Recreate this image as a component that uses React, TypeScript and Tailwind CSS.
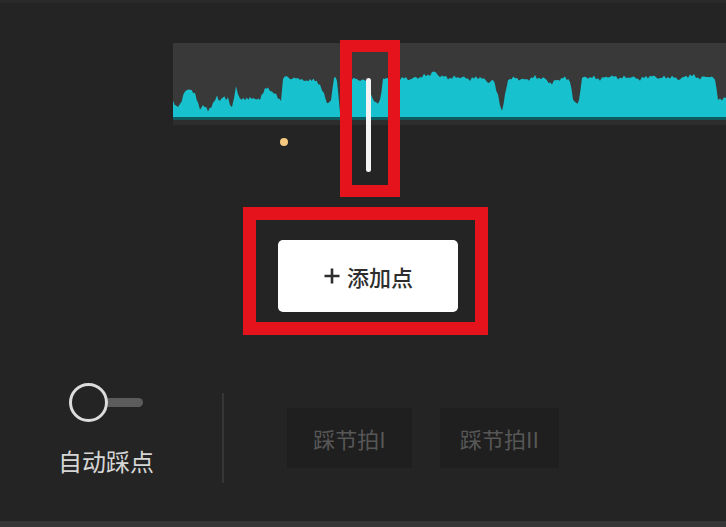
import React from "react";

const KEYS: [number, number][] = [
  [173,102],[176,107],[180,104],[185,92],[190,88],[195,95],[200,108],[203,106],[208,110],[213,104],[217,97],[220,100],[223,97],[226,100],[228,98],[232,108],[236,88],[240,98],[245,100],[250,97],[255,100],[260,98],[265,90],[268,87],[272,92],[278,97],[281,100],[283,80],[286,76],[292,79],[300,78],[305,82],[310,79],[315,81],[320,84],[324,95],[327,103],[331,100],[334,78],[337,80],[340,112],[343,100],[348,80],[355,79],[362,80],[368,82],[372,98],[376,104],[380,100],[383,80],[388,78],[395,80],[400,78],[410,79],[420,77],[428,75],[434,72],[440,76],[450,78],[460,77],[470,79],[480,77],[488,82],[493,80],[498,95],[502,112],[505,96],[508,79],[515,78],[525,80],[535,77],[545,79],[552,84],[556,80],[565,78],[570,80],[573,100],[576,104],[579,100],[582,78],[590,77],[600,79],[610,76],[620,78],[630,77],[640,79],[650,76],[660,78],[670,77],[680,79],[690,75],[700,78],[710,76],[715,80],[718,98],[722,100],[726,98],
];

function wavePath(): string {
  const ox = 173;
  const oy = 43;
  const pts: string[] = [];
  for (let i = 0; i < KEYS.length - 1; i++) {
    const [x0, y0] = KEYS[i];
    const [x1, y1] = KEYS[i + 1];
    const steps = Math.max(1, Math.round((x1 - x0) / 2));
    for (let s = 0; s < steps; s++) {
      const t = s / steps;
      const x = x0 + (x1 - x0) * t;
      let y = y0 + (y1 - y0) * t;
      const n = Math.sin(x * 1.7) * 1.2 + Math.sin(x * 0.63 + 1.3) * 1.0;
      y += n;
      pts.push(`${(x - ox).toFixed(1)},${(y - oy).toFixed(1)}`);
    }
  }
  const last = KEYS[KEYS.length - 1];
  pts.push(`${last[0] - ox},${last[1] - oy}`);
  return `M0,74 L${pts.join(" L")} L553,74 Z`;
}

const D = wavePath();

export default function App() {
  return (
    <div
      className="relative w-[726px] h-[527px] overflow-hidden bg-[#242424] flex flex-col"
      style={{ fontFamily: '"Noto Sans CJK SC", "Noto Sans", sans-serif' }}
    >
      <div className="h-[3px] bg-[#2a2a2a]" />

      {/* waveform */}
      <div className="mt-[40px] ml-[173px] flex flex-col">
        <div className="relative h-[74px] bg-[#393939]">
          <svg width="553" height="74" viewBox="0 0 553 74" className="absolute left-0 top-0">
            <path d={D} fill="#17c2ce" />
          </svg>
        </div>
        <div className="h-[3px] bg-[#0f5a5f]" />
        <div className="h-[5px] bg-[#2d2d2d]" />
      </div>

      {/* add point button */}
      <div className="mt-[115px] ml-[278px] w-[180px] h-[72px] rounded-[5px] bg-white flex items-center justify-center gap-[6px] text-[22px] text-[#2e2e2e] font-medium">
        <svg width="18" height="18" viewBox="0 0 18 18" className="-mt-[1px]">
          <path d="M9 1.5v15M1.5 9h15" stroke="#2e2e2e" strokeWidth="2.6" />
        </svg>
        <span className="leading-none">添加点</span>
      </div>

      {/* bottom controls */}
      <div className="mt-[71px] flex items-start">
        <div className="ml-[57px] w-[98px] flex flex-col items-center">
          <div className="flex items-center">
            <div className="w-[39px] h-[39px] rounded-full border-[3px] border-[#dcdcdc]" />
            <div className="w-[35px] h-[9px] rounded-r-full bg-[#5c5c5c]" />
          </div>
          <div className="mt-[24px] text-[24px] leading-[30px] text-[#d6d6d6] whitespace-nowrap">自动踩点</div>
        </div>
        <div className="ml-[67px] mt-[10px] w-[2px] h-[90px] bg-[#363636]" />
        <div className="ml-[63px] mt-[25px] flex gap-[28px]">
          <div className="w-[125px] h-[60px] bg-[#1f1f1f] flex items-center justify-center text-[22px] text-[#575757]">踩节拍I</div>
          <div className="w-[119px] h-[60px] bg-[#1f1f1f] flex items-center justify-center text-[22px] text-[#575757]">踩节拍II</div>
        </div>
      </div>

      <div className="mt-auto h-[6px] bg-[#363636]" />

      {/* overlays on timeline canvas */}
      <div className="absolute left-[280px] top-[138px] w-[8px] h-[8px] rounded-full bg-[#f5c97f]" />
      <div className="absolute left-[366px] top-[78px] w-[5px] h-[94px] rounded-full bg-[#f4f4f4]" />

      {/* red annotation boxes */}
      <div className="absolute left-[340px] top-[40px] w-[60px] h-[157px] border-[12px] border-[#e5141c]" />
      <div className="absolute left-[243px] top-[207px] w-[245px] h-[128px] border-[13px] border-[#e5141c]" />
    </div>
  );
}
